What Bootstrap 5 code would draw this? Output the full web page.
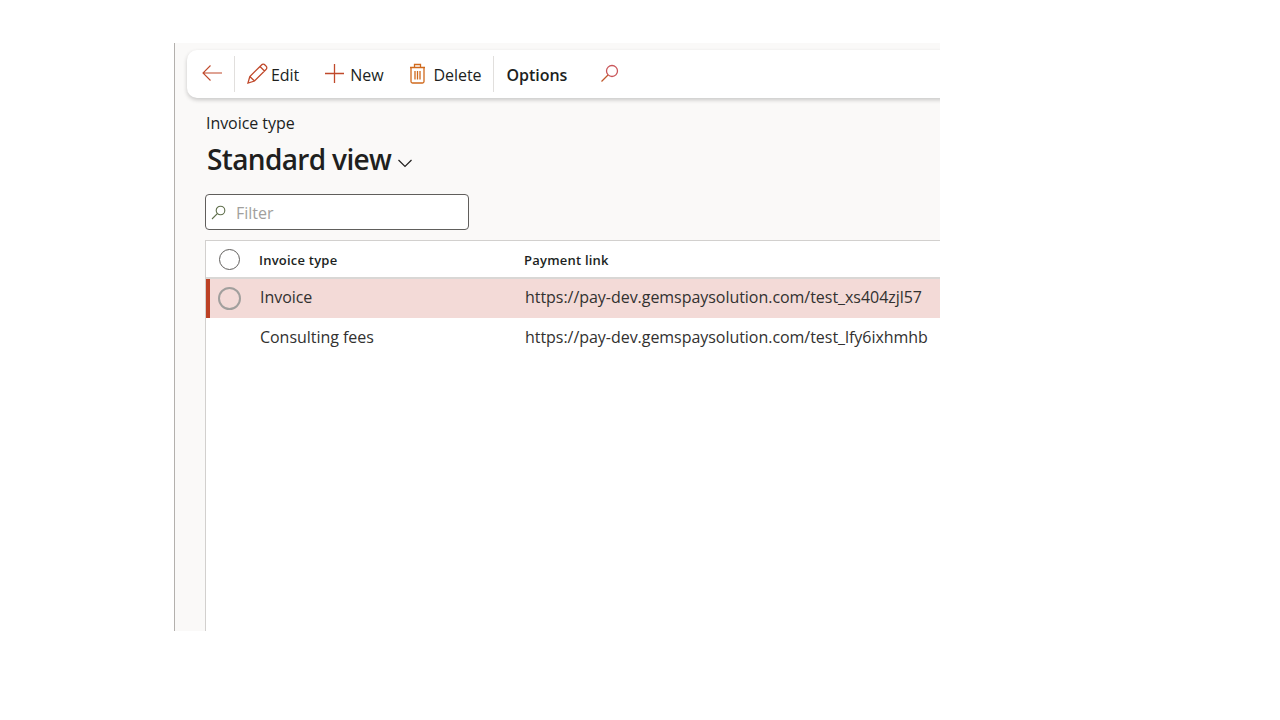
<!DOCTYPE html>
<html lang="en">
<head>
<meta charset="utf-8">
<title>Invoice type</title>
<link href="https://cdn.jsdelivr.net/npm/bootstrap@5.3.0/dist/css/bootstrap.min.css" rel="stylesheet">
<style>
html,body{height:100%;background:#fff;font-family:"Open Sans","Noto Sans",sans-serif;color:#201f1e}
.app-frame{margin:43px 0 0 174px;width:766px;height:588px;background:#faf9f8;border-left:1px solid #b3b0ad;overflow:hidden}
.cmd-bar{margin:7px -40px 0 12px;height:48px;background:#fff;border-radius:10px;box-shadow:0 2px 4px rgba(0,0,0,.2)}
.cmd-btn{font-size:16px;letter-spacing:-.05px;color:#201f1e;white-space:nowrap}
.cmd-btn span,.cmd-opt{padding-top:2px}
.cmd-sep{width:1px;height:36px;background:#e1dfdd}
.cmd-back{width:47px;padding-left:2px;padding-bottom:2px}
.cmd-edit{margin-left:12px}.cmd-new{margin-left:25px}.cmd-del{margin-left:24px}
.cmd-opt{margin-left:13px;font-weight:600;letter-spacing:-.05px;font-size:16px}
.cmd-find{margin-left:33px;padding-bottom:2px}
.cmd-ico{margin-right:3px;margin-bottom:2px;flex:none}
.cmd-new .cmd-ico{margin-right:5px}
.cmd-del .cmd-ico{margin-right:7px}
.sep-after{margin-left:11px}
.page-body{margin-left:31px}
.crumb{font-size:16px;letter-spacing:-.05px;line-height:22px;margin:14px 0 0 0}
.view-line{margin:6px 0 0 1px;height:38px}
.view-title{font-size:28px;font-weight:600;letter-spacing:-.65px;line-height:38px;margin:0}
.view-chev{margin-left:6px;margin-top:8px}
.filter-box{margin:16px 0 0 -1px;width:264px;height:36px;background:#fff;border:1px solid #605e5c;border-radius:4px;padding-left:5px}
.filter-box span{font-size:16px;letter-spacing:0;color:#a19f9d;margin-left:10px;padding-top:2px}
.grid-box{margin:10px -40px 0 -1px;height:400px;background:#fff;border-left:1px solid #d2d0ce;border-top:1px solid #d2d0ce}
.grid-head{height:38px;border-bottom:2px solid #d9d7d5;font-size:13px;font-weight:600;letter-spacing:.22px}
.grid-head .cell-type,.grid-head .cell-link{padding-top:4px}
.grid-line{height:40px;font-size:16px;letter-spacing:-.04px;color:#323130;padding-bottom:3px}
.grid-line.picked{height:39px;background:#f3dad7;border-left:4px solid #bc4125}
.cell-check{width:53px;flex:none}
.cell-type{width:265px;flex:none}
.round-check{width:21px;height:21px;border-radius:50%;border:1px solid #605e5c;margin-left:13px;display:block;background:#fff}
.picked .round-check{width:23px;height:23px;background:transparent;border:2px solid #a19f9d;margin-left:8px;position:relative;top:1px}
.picked .cell-check{width:50px}
.grid-line:not(.picked) .cell-check{width:54px}
</style>
</head>
<body>
<div class="app-frame">
  <div class="cmd-bar d-flex align-items-center">
    <div class="cmd-back d-flex justify-content-center">
      <svg width="22" height="18" viewBox="0 0 22 18" fill="none" stroke="#c0492b" stroke-width="1.1"><path d="M21 9H2M9.500 1.500 2 9l7.500 7.500"/></svg>
    </div>
    <div class="cmd-sep"></div>
    <div class="cmd-btn cmd-edit d-flex align-items-center">
      <svg class="cmd-ico" width="21" height="21" viewBox="0 0 21 21" fill="none" stroke="#c0492b" stroke-width="1.300"><path d="M1 20 2.800 13.500 14.500 2a2.200 2.200 0 0 1 3.500 0l1 1a2.300 2.300 0 0 1 0 3.500L7.500 18zM2.800 13.500 7.500 18M13 3.500l4.500 4.500"/></svg>
      <span>Edit</span>
    </div>
    <div class="cmd-btn cmd-new d-flex align-items-center">
      <svg class="cmd-ico" width="21" height="21" viewBox="0 0 21 21" fill="none" stroke="#c0492b" stroke-width="1.300"><path d="M10.500 1v19M1 10.500h19"/></svg>
      <span>New</span>
    </div>
    <div class="cmd-btn cmd-del d-flex align-items-center">
      <svg class="cmd-ico" width="19" height="21" viewBox="0 0 19 21" fill="none" stroke="#d0691c" stroke-width="1.300"><path d="M2 4.500h15M6.500 4.500V1.500h6v3M3 4.500v14c0 1 .6 1.500 1.500 1.500h10c.9 0 1.500-.5 1.500-1.500v-14M7 8v8.500M9.500 8v8.500M12 8v8.500"/></svg>
      <span>Delete</span>
    </div>
    <div class="cmd-sep sep-after"></div>
    <div class="cmd-opt">Options</div>
    <div class="cmd-find d-flex">
      <svg width="19" height="19" viewBox="0 0 19 19" fill="none" stroke-width="1.300"><circle cx="12" cy="7" r="5.500" stroke="#c9565a"/><path d="M8 11 1.500 17.500" stroke="#c0592b"/></svg>
    </div>
  </div>
  <div class="page-body">
    <div class="crumb">Invoice type</div>
    <div class="view-line d-flex align-items-center">
      <h1 class="view-title">Standard view</h1>
      <svg class="view-chev" width="16" height="10" viewBox="0 0 16 10" fill="none" stroke="#201f1e" stroke-width="1.200"><path d="M1.500 2 8 8.500 14.500 2"/></svg>
    </div>
    <div class="filter-box d-flex align-items-center">
      <svg width="15" height="15" viewBox="0 0 15 15" fill="none" stroke="#5e6e4a" stroke-width="1.100"><circle cx="9.500" cy="5.500" r="4.300"/><path d="M6.300 8.700 1 14"/></svg>
      <span>Filter</span>
    </div>
    <div class="grid-box">
      <div class="grid-head d-flex align-items-center">
        <div class="cell-check"><span class="round-check"></span></div>
        <div class="cell-type">Invoice type</div>
        <div class="cell-link">Payment link</div>
      </div>
      <div class="grid-line picked d-flex align-items-center">
        <div class="cell-check"><span class="round-check"></span></div>
        <div class="cell-type">Invoice</div>
        <div>https://pay-dev.gemspaysolution.com/test_xs404zjl57</div>
      </div>
      <div class="grid-line d-flex align-items-center">
        <div class="cell-check"></div>
        <div class="cell-type">Consulting fees</div>
        <div>https://pay-dev.gemspaysolution.com/test_lfy6ixhmhb</div>
      </div>
    </div>
  </div>
</div>
<script src="https://cdn.jsdelivr.net/npm/bootstrap@5.3.0/dist/js/bootstrap.bundle.min.js"></script>
</body>
</html>
